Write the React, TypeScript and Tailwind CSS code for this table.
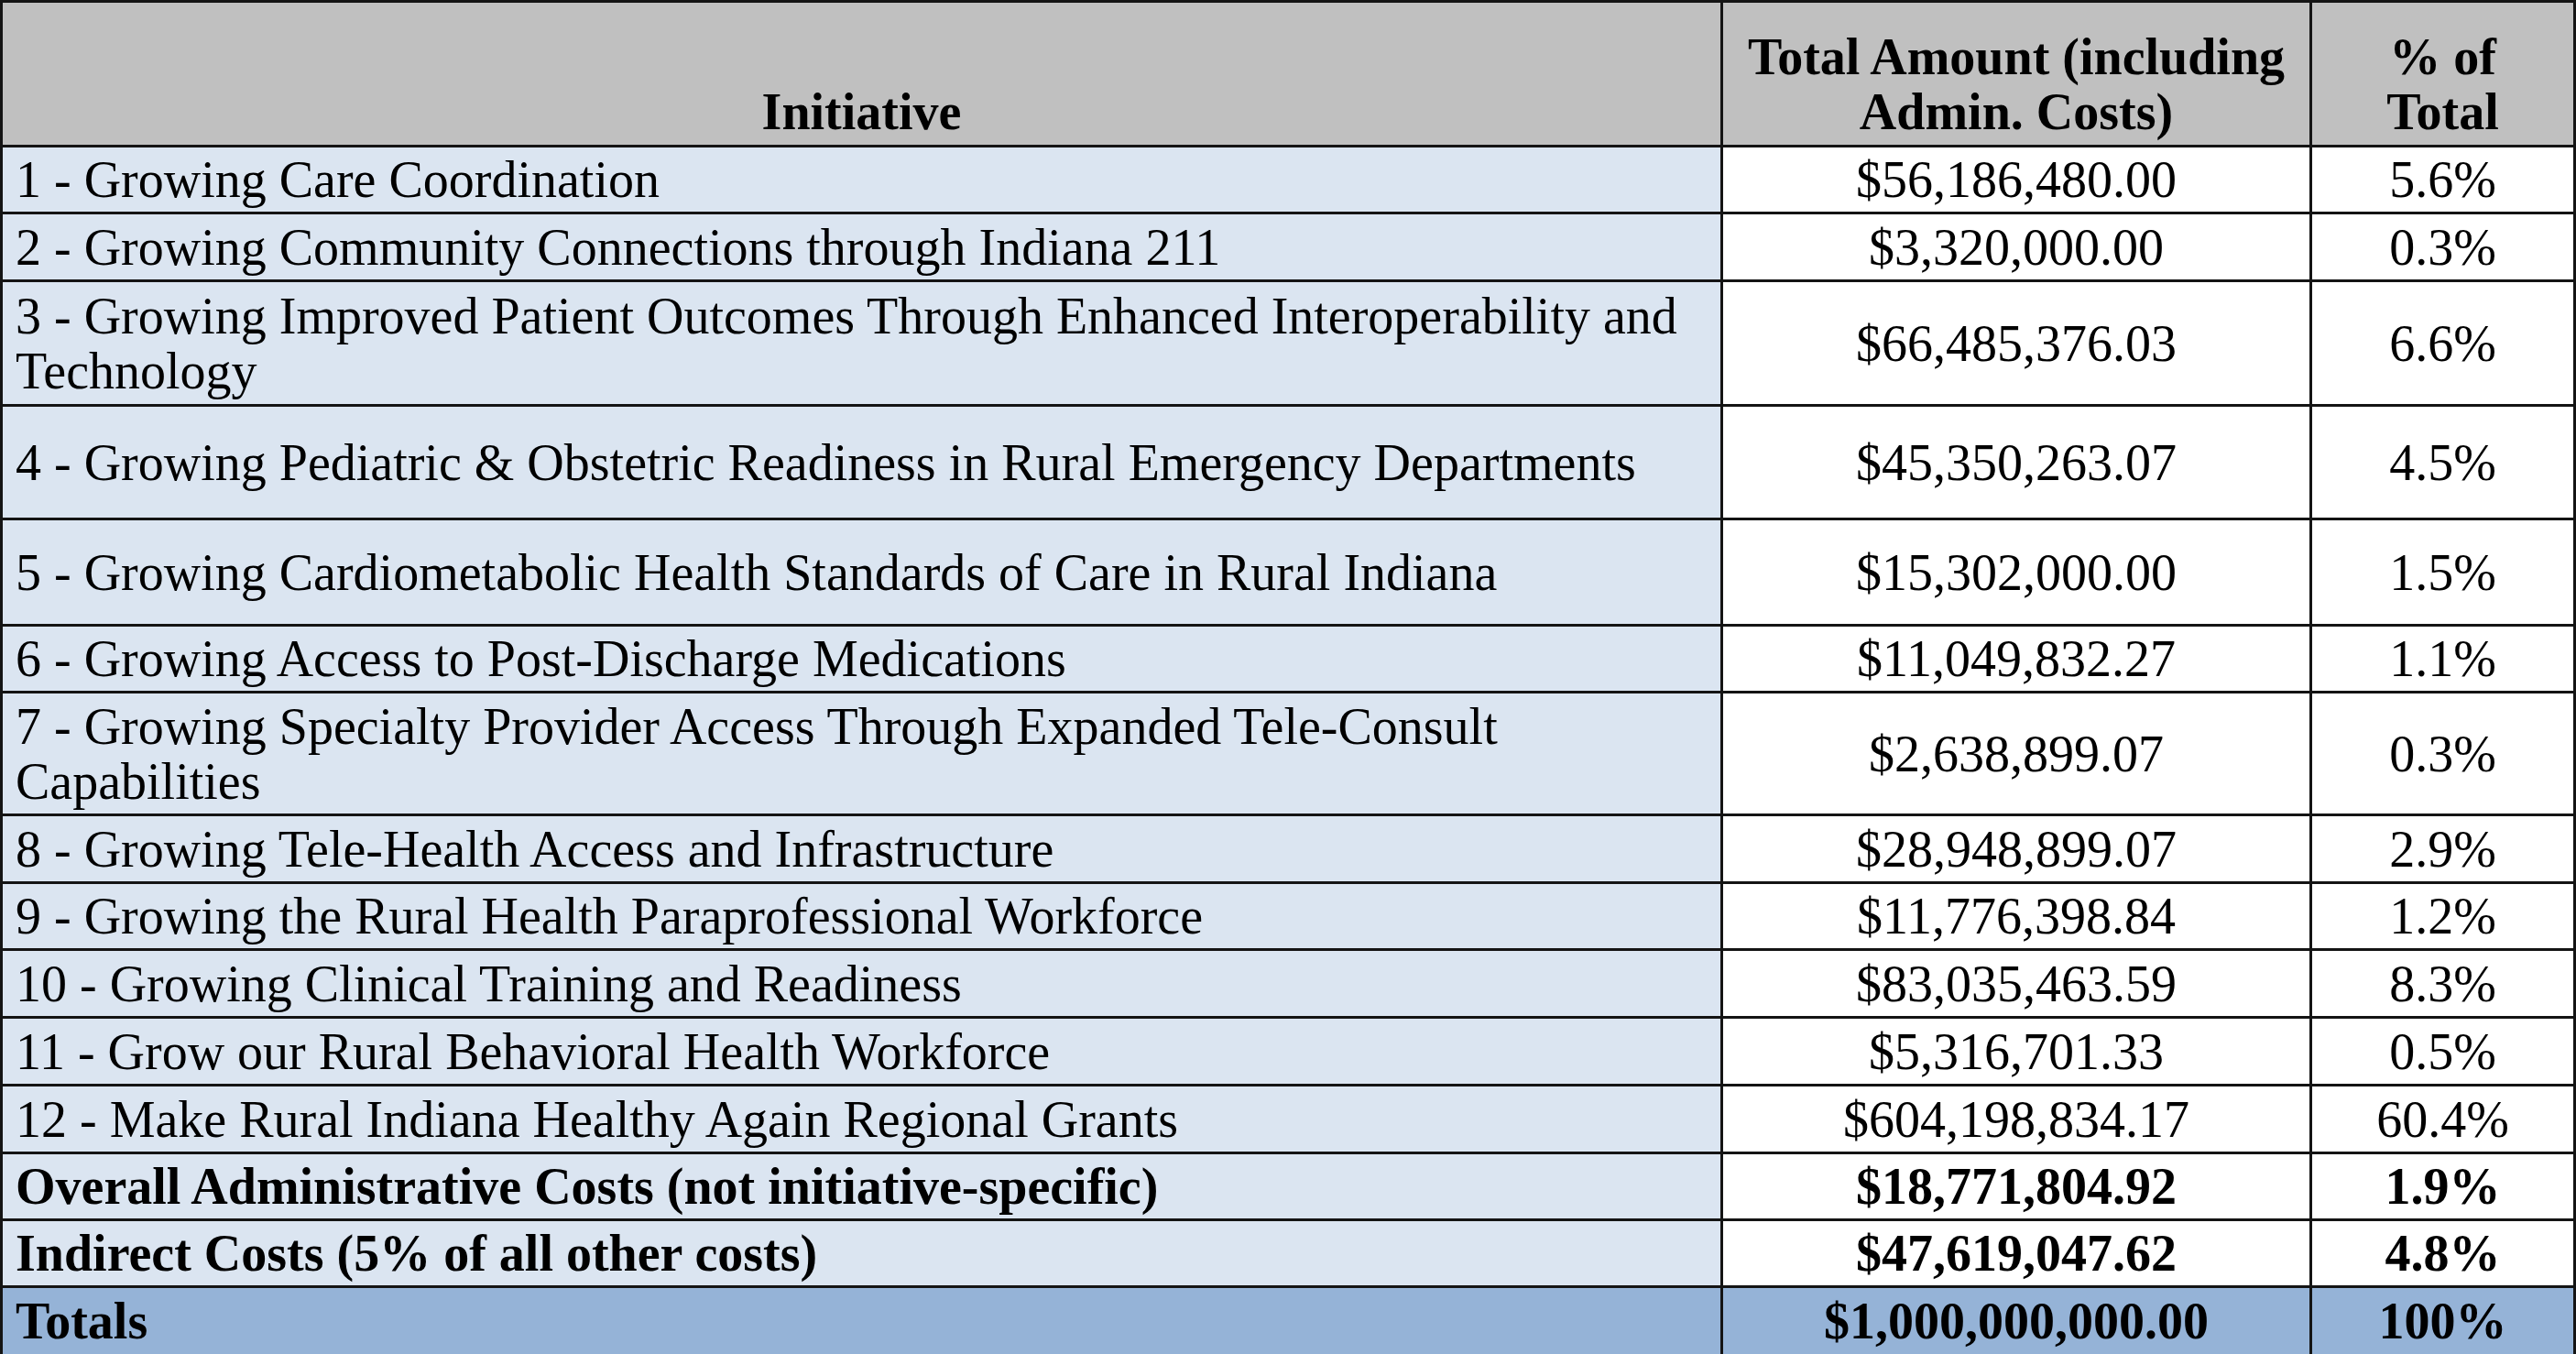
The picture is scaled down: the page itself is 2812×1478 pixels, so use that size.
import React from 'react';

type Row = { label: string; amount: string; pct: string; bold?: boolean };

const rows: Row[] = [
  { label: '1 - Growing Care Coordination', amount: '$56,186,480.00', pct: '5.6%' },
  { label: '2 - Growing Community Connections through Indiana 211', amount: '$3,320,000.00', pct: '0.3%' },
  {
    label: '3 - Growing Improved Patient Outcomes Through Enhanced Interoperability and Technology',
    amount: '$66,485,376.03',
    pct: '6.6%'
  },
  {
    label: '4 - Growing Pediatric & Obstetric Readiness in Rural Emergency Departments',
    amount: '$45,350,263.07',
    pct: '4.5%'
  },
  {
    label: '5 - Growing Cardiometabolic Health Standards of Care in Rural Indiana',
    amount: '$15,302,000.00',
    pct: '1.5%'
  },
  { label: '6 - Growing Access to Post-Discharge Medications', amount: '$11,049,832.27', pct: '1.1%' },
  {
    label: '7 - Growing Specialty Provider Access Through Expanded Tele-Consult Capabilities',
    amount: '$2,638,899.07',
    pct: '0.3%'
  },
  { label: '8 - Growing Tele-Health Access and Infrastructure', amount: '$28,948,899.07', pct: '2.9%' },
  { label: '9 - Growing the Rural Health Paraprofessional Workforce', amount: '$11,776,398.84', pct: '1.2%' },
  { label: '10 - Growing Clinical Training and Readiness', amount: '$83,035,463.59', pct: '8.3%' },
  { label: '11 - Grow our Rural Behavioral Health Workforce', amount: '$5,316,701.33', pct: '0.5%' },
  { label: '12 - Make Rural Indiana Healthy Again Regional Grants', amount: '$604,198,834.17', pct: '60.4%' },
  {
    label: 'Overall Administrative Costs (not initiative-specific)',
    amount: '$18,771,804.92',
    pct: '1.9%',
    bold: true
  },
  { label: 'Indirect Costs (5% of all other costs)', amount: '$47,619,047.62', pct: '4.8%', bold: true }
];

export default function App() {
  return (
    <div className="w-[2812px] bg-white text-black font-['Liberation_Serif','Times_New_Roman',serif] text-[56px] leading-[60px]">
      {/* Table drawn as a grid: the dark background shows through the gaps as cell borders */}
      <div className="grid grid-cols-[1875px_640px_285px] grid-rows-[155px_70px_71px_133px_121px_113px_70px_131px_71px_70px_71px_71px_71px_70px_70px_72px] gap-[3px] bg-[#141414] border-[3px] border-[#141414]">
        {/* Header */}
        <div className="bg-[#c0c0c0] flex items-end justify-center pb-[6px] font-bold">Initiative</div>
        <div className="bg-[#c0c0c0] flex items-end justify-center pb-[6px] font-bold text-center">
          <span>
            Total Amount (including
            <br />
            Admin. Costs)
          </span>
        </div>
        <div className="bg-[#c0c0c0] flex items-end justify-center pb-[6px] font-bold text-center">
          <span>
            % of
            <br />
            Total
          </span>
        </div>

        {rows.map((r, i) => (
          <React.Fragment key={i}>
            <div className={`bg-[#dbe5f1] flex items-center pl-[14px] pr-[10px] ${r.bold ? 'font-bold' : ''}`}>
              <span>{r.label}</span>
            </div>
            <div className={`bg-white flex items-center justify-center ${r.bold ? 'font-bold' : ''}`}>{r.amount}</div>
            <div className={`bg-white flex items-center justify-center ${r.bold ? 'font-bold' : ''}`}>{r.pct}</div>
          </React.Fragment>
        ))}

        {/* Totals */}
        <div className="bg-[#95b3d7] flex items-center pl-[14px] font-bold">Totals</div>
        <div className="bg-[#95b3d7] flex items-center justify-center font-bold">$1,000,000,000.00</div>
        <div className="bg-[#95b3d7] flex items-center justify-center font-bold">100%</div>
      </div>
    </div>
  );
}
